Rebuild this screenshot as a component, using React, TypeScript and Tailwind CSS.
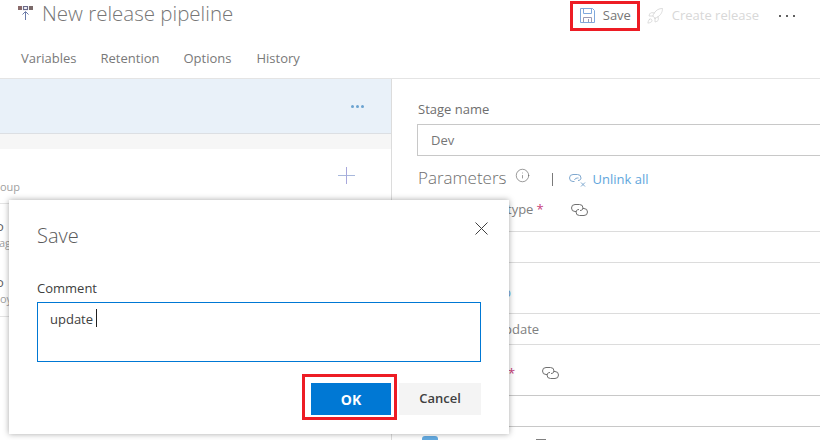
import React from 'react';
import { Info, Rocket } from 'lucide-react';

const LinkIcon = ({ unlink = false, className = '' }: { unlink?: boolean; className?: string }) => (
  <svg width="17" height="14" viewBox="0 0 17 14" fill="none" stroke="currentColor" strokeWidth="1" className={className}>
    <path d="M5.5 8.5H4a3.5 3.5 0 0 1 0-7h4.5A3.5 3.5 0 0 1 12 5c0 1.5-1.2 2.5-3 2.5" />
    {unlink ? (
      <>
        <path d="M5.5 7a3 3 0 0 1 3-2h1" />
        <path d="M12 9.5l4 4M16 9.5l-4 4" />
      </>
    ) : (
      <path d="M11.5 5.5H13a3.5 3.5 0 0 1 0 7H8.5A3.5 3.5 0 0 1 5 9c0-1.5 1.2-2.5 3-2.5" />
    )}
  </svg>
);

const PipelineIcon = () => (
  <svg width="15" height="15" viewBox="0 0 15 15" fill="none">
    <rect x="0" y="0" width="4" height="4" fill="#8a6a6a" />
    <rect x="5.5" y="0.5" width="4" height="3" fill="none" stroke="#6a6a8a" strokeWidth="1.2" />
    <rect x="11" y="0" width="4" height="4" fill="#7a6a6a" />
    <path d="M7.5 14V6M4.5 8.5l3-3 3 3" stroke="#6a7aa8" strokeWidth="1" />
  </svg>
);

const FloppyIcon = () => (
  <svg width="15" height="15" viewBox="0 0 15 15" fill="none" stroke="#7fa8dc" strokeWidth="1">
    <path d="M.5.5h12l2 2v12H.5z" />
    <path d="M3.5.5v5h8v-5" />
    <path d="M3.5 14.5v-5h8v5" stroke="#9a9ab4" />
    <path d="M8.5 11v3" stroke="#9a9ab4" />
  </svg>
);

const CloseIcon = () => (
  <svg width="13" height="13" viewBox="0 0 13 13" stroke="#404040" strokeWidth="1">
    <path d="M.5.5l12 12M12.5.5l-12 12" />
  </svg>
);

const PlusIcon = () => (
  <svg width="17" height="17" viewBox="0 0 17 17" fill="none">
    <path d="M0 8.5h17" stroke="#a8b8dc" />
    <path d="M8.5 0v17" stroke="#a8a8dc" />
  </svg>
);

const LeftPanel = () => (
  <div className="w-[392px] shrink-0 border-r border-[#dcdcdc]">
    <div className="h-[55px] bg-[#e9f1f9] border-b border-[#dcdfe3] flex items-center justify-end pr-[27px]">
      <div className="flex gap-[2px]">
        <span className="w-[3px] h-[3px] rounded-full bg-[#6ba3d0]" />
        <span className="w-[3px] h-[3px] rounded-full bg-[#6ba3d0]" />
        <span className="w-[3px] h-[3px] rounded-full bg-[#6ba3d0]" />
      </div>
    </div>
    <div className="h-[15px] bg-[#f6f6f6]" />
    <div className="h-[55px] border-b border-[#e4e4e4] flex justify-between pr-[36px]">
      <span className="mt-[31px] text-[11px] leading-[14px] text-[#a0a0a0] w-[18px]">oup</span>
      <span className="mt-[18px]"><PlusIcon /></span>
    </div>
    {/* rows are mostly covered by the dialog, only their first letters show */}
    <div className="h-[113px] border-b border-[#e4e4e4] text-[11px] leading-[14px] text-[#a0a0a0]">
      <div className="pt-[14px] h-[32px] text-[13px] leading-[16px] text-[#606060] -ml-[4px]">o</div>
      <div className="-ml-[1px]">ag</div>
      <div className="pt-[24px] h-[42px] text-[13px] leading-[16px] text-[#606060] -ml-[4px]">o</div>
      <div>oy</div>
    </div>
  </div>
);

const RightPanel = () => (
  <div className="flex-1 pl-[25px]">
    <div className="pt-[21px] pl-[1px] text-[13px] leading-[18px] text-[#6e6e6e]">Stage name</div>
    <div className="mt-[6px] h-[32px] border border-[#c8c8c8] border-r-0 pl-[13px] pt-[1px] flex items-center text-[13px] text-[#767676]">Dev</div>
    <div className="mt-[10px] pl-[1px] flex items-center h-[24px]">
      <span className="text-[17px] font-light text-[#6e6e6e]">Parameters</span>
      <Info size={15} strokeWidth={1} className="ml-[8px] -mt-[5px] text-[#606060]" />
      <span className="ml-[22px] mt-[2px] w-px h-[13px] bg-[#7a7a7a]" />
      <LinkIcon unlink className="ml-[16px] mt-[4px] text-[#7fa8cf]" />
      <span className="ml-[7px] mt-[4px] text-[13px] text-[#61a6dc]">Unlink all</span>
    </div>
    <div className="-ml-[1px] mt-[10px] h-[32px] border-b border-[#dcdcdc] flex items-start text-[13px] text-[#808080] leading-[18px]">
      <span className="ml-[91px]">type</span>
      <span className="ml-[3px] text-[#c8407a]">*</span>
      <LinkIcon className="ml-[27px] mt-[3px] text-[#707070]" />
    </div>
    <div className="-ml-[1px] h-[31px] border-b border-[#dcdcdc]" />
    <div className="-ml-[1px] h-[51px] border-b border-[#dcdcdc] pt-[20px] text-[13px] leading-[18px] text-[#61a6dc]">
      <span className="ml-[87px]">b</span>
    </div>
    <div className="-ml-[1px] h-[31px] border-b border-[#dcdcdc] flex items-center pt-[2px] text-[13px] text-[#808080]">
      <span className="ml-[88px]">pdate</span>
    </div>
    <div className="-ml-[1px] h-[51px] border-b border-[#c8c8c8] flex items-start pt-[19px] text-[13px] leading-[18px] text-[#c8407a]">
      <span className="ml-[92px]">*</span>
      <LinkIcon className="ml-[27px] mt-[2px] text-[#707070]" />
    </div>
    <div className="-ml-[1px] h-[31px] border-b border-[#c8c8c8]" />
    <div className="mt-[9px] ml-[5px] flex items-start text-[13px] leading-[18px] text-[#606060]">
      <span className="w-[16px] h-[16px] rounded-[3px] bg-[#64aae0]" />
      <span className="ml-[14px]">Add build</span>
      <span className="ml-[26px] mt-[3px] w-[10px] h-[10px] bg-[#808080]" />
    </div>
  </div>
);

const SaveDialog = () => (
  <div className="absolute left-[9px] top-[200px] w-[500px] h-[234px] bg-white shadow-[0_0_6px_rgba(0,0,0,0.35)] pl-[28px] pr-[28px]">
    <div className="flex justify-between pt-[21px]">
      <span className="text-[20px] leading-[30px] font-light text-[#5a5a5a]">Save</span>
      <span className="pt-[1px] -mr-[7px]"><CloseIcon /></span>
    </div>
    <div className="mt-[28px] text-[13px] leading-[18px] text-[#404040]">Comment</div>
    <div className="mt-[5px] h-[60px] border border-[#0078d4] pl-[12px] pt-[6px] flex items-start text-[13px] leading-[20px] text-[#404040]">
      <span>update</span>
      <span className="ml-[3px] w-px h-[18px] bg-[#202020]" />
    </div>
    <div className="mt-[12px] flex justify-end items-start">
      <div className="border-[3px] border-[#ed1c24] pl-[6px] pt-[6px] pb-[2px] pr-[3px]">
        <button className="block w-[80px] h-[32px] bg-[#0078d4] text-white text-[14px] font-bold">OK</button>
      </div>
      <button className="ml-[2px] mt-[9px] w-[82px] h-[32px] bg-[#f4f4f4] text-[#404040] text-[13px] font-semibold">Cancel</button>
    </div>
  </div>
);

export default function App() {
  return (
    <div className="relative w-[820px] h-[440px] overflow-hidden bg-white font-['Open_Sans',sans-serif]">
      <div className="h-[79px] border-b border-[#e4e4e4]">
        <div className="h-[31px] flex items-center justify-between pr-[25px]">
          <div className="flex items-center pl-[18px] -mt-[4px]">
            <PipelineIcon />
            <span className="ml-[9px] text-[20.5px] font-light text-[#767676]">New release pipeline</span>
          </div>
          <div className="flex items-center">
            <div className="w-[70px] h-[30px] border-[3px] border-[#ed1c24] flex items-center pl-[7px]">
              <FloppyIcon />
              <span className="ml-[8px] text-[13px] text-[#767676]">Save</span>
            </div>
            <Rocket size={18} strokeWidth={1} className="ml-[6px] text-[#d0d0d0]" />
            <span className="ml-[8px] text-[13px] text-[#d8d8d8]">Create release</span>
            <div className="ml-[20px] flex gap-[5px]">
              <span className="w-[2px] h-[2px] bg-[#606060]" />
              <span className="w-[2px] h-[2px] bg-[#606060]" />
              <span className="w-[2px] h-[2px] bg-[#606060]" />
            </div>
          </div>
        </div>
        <div className="mt-[18px] pl-[21px] flex gap-[24px] text-[13px] leading-[18px] text-[#797979]">
          <span>Variables</span>
          <span>Retention</span>
          <span>Options</span>
          <span className="ml-[1px]">History</span>
        </div>
      </div>
      <div className="flex">
        <LeftPanel />
        <RightPanel />
      </div>
      <SaveDialog />
    </div>
  );
}
